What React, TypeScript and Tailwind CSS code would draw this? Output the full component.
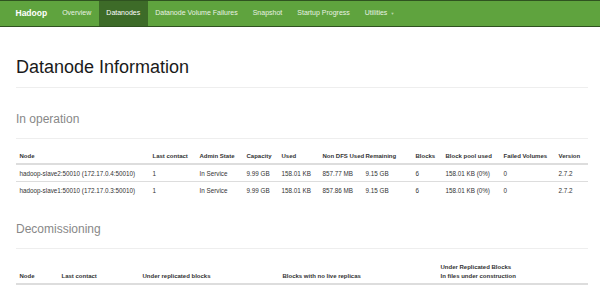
import { Fragment } from 'react'

const navLinks = [
  { label: 'Overview' },
  { label: 'Datanodes', active: true },
  { label: 'Datanode Volume Failures' },
  { label: 'Snapshot' },
  { label: 'Startup Progress' },
]

const opCols = [
  { label: 'Node', w: 'w-[133px]' },
  { label: 'Last contact', w: 'w-[47px]' },
  { label: 'Admin State', w: 'w-[47px]' },
  { label: 'Capacity', w: 'w-[35px]' },
  { label: 'Used', w: 'w-[41px]' },
  { label: 'Non DFS Used', w: 'w-[43px]' },
  { label: 'Remaining', w: 'w-[50px]' },
  { label: 'Blocks', w: 'w-[30px]' },
  { label: 'Block pool used', w: 'w-[58px]' },
  { label: 'Failed Volumes', w: 'w-[55px]' },
  { label: 'Version', w: 'w-[33px]' },
]

const nodes = [
  ['hadoop-slave2:50010 (172.17.0.4:50010)', '1', 'In Service', '9.99 GB', '158.01 KB', '857.77 MB', '9.15 GB', '6', '158.01 KB (0%)', '0', '2.7.2'],
  ['hadoop-slave1:50010 (172.17.0.3:50010)', '1', 'In Service', '9.99 GB', '158.01 KB', '857.86 MB', '9.15 GB', '6', '158.01 KB (0%)', '0', '2.7.2'],
]

const decomCols = [
  { label: ['Node'], w: 'w-[42px]' },
  { label: ['Last contact'], w: 'w-[81px]' },
  { label: ['Under replicated blocks'], w: 'w-[140px]' },
  { label: ['Blocks with no live replicas'], w: 'w-[158px]' },
  { label: ['Under Replicated Blocks', 'In files under construction'], w: 'w-[151px]' },
]

function SectionTitle({ children }: { children: string }) {
  return (
    <h2 className="mt-[24px] border-b border-[#eee] pb-[12px] text-[12px] leading-[14px] text-[#888]">
      {children}
    </h2>
  )
}

export default function App() {
  return (
    <div className="min-h-screen bg-white font-['Liberation_Sans',Arial,sans-serif] text-[#333]">
      {/* barre de navigation */}
      <nav className="flex h-[27px] items-stretch border-y border-[#2f5220] bg-[#5fa33e] pl-[8px] text-[7px]">
        <span className="flex items-center px-[7.5px] text-[8.5px] font-bold text-white">Hadoop</span>
        {navLinks.map(l => (
          <a
            key={l.label}
            className={
              l.active
                ? 'flex items-center bg-[#3d6b28] px-[7.5px] text-white'
                : 'flex items-center px-[7.5px] text-[#e8f2e2]'
            }
          >
            {l.label}
          </a>
        ))}
        <a className="flex items-center gap-[3px] px-[7.5px] text-[#e8f2e2]">
          Utilities
          <span className="text-[4px] text-[#b8d6a8]">▼</span>
        </a>
      </nav>

      <div className="mr-[12px] ml-[16px]">
        <h1 className="mt-[30px] border-b border-[#eee] pb-[10px] text-[18px] leading-[20px] text-[#1a1a1a]">
          Datanode Information
        </h1>

        <SectionTitle>In operation</SectionTitle>

        <table className="mt-[9px] w-full table-fixed border-collapse text-[6.3px] leading-[9px]">
          <colgroup>
            {opCols.map(c => (
              <col key={c.label} className={c.w} />
            ))}
          </colgroup>
          <thead>
            <tr>
              {opCols.map(c => (
                <th key={c.label} className="border-b-2 border-[#ddd] px-[3.5px] pt-[4px] pb-[2px] text-left text-[6px] font-bold whitespace-nowrap">
                  {c.label}
                </th>
              ))}
            </tr>
          </thead>
          <tbody>
            {nodes.map((row, i) => (
              <tr key={i} className={i > 0 ? 'border-t border-[#ddd]' : ''}>
                {row.map((cell, j) => (
                  <td key={j} className="px-[3.5px] py-[3.5px] whitespace-nowrap">
                    {cell}
                  </td>
                ))}
              </tr>
            ))}
          </tbody>
        </table>

        <SectionTitle>Decomissioning</SectionTitle>

        <table className="mt-[9px] w-full table-fixed border-collapse text-[6px] leading-[9px]">
          <colgroup>
            {decomCols.map((c, i) => (
              <col key={i} className={c.w} />
            ))}
          </colgroup>
          <thead>
            <tr>
              {decomCols.map((c, i) => (
                <th key={i} className="border-b-2 border-[#ddd] px-[3.5px] pt-[5px] pb-[2px] text-left align-bottom font-bold whitespace-nowrap">
                  {c.label.map((t, k) => (
                    <Fragment key={k}>
                      {k > 0 && <br />}
                      {t}
                    </Fragment>
                  ))}
                </th>
              ))}
            </tr>
          </thead>
        </table>
      </div>
    </div>
  )
}
